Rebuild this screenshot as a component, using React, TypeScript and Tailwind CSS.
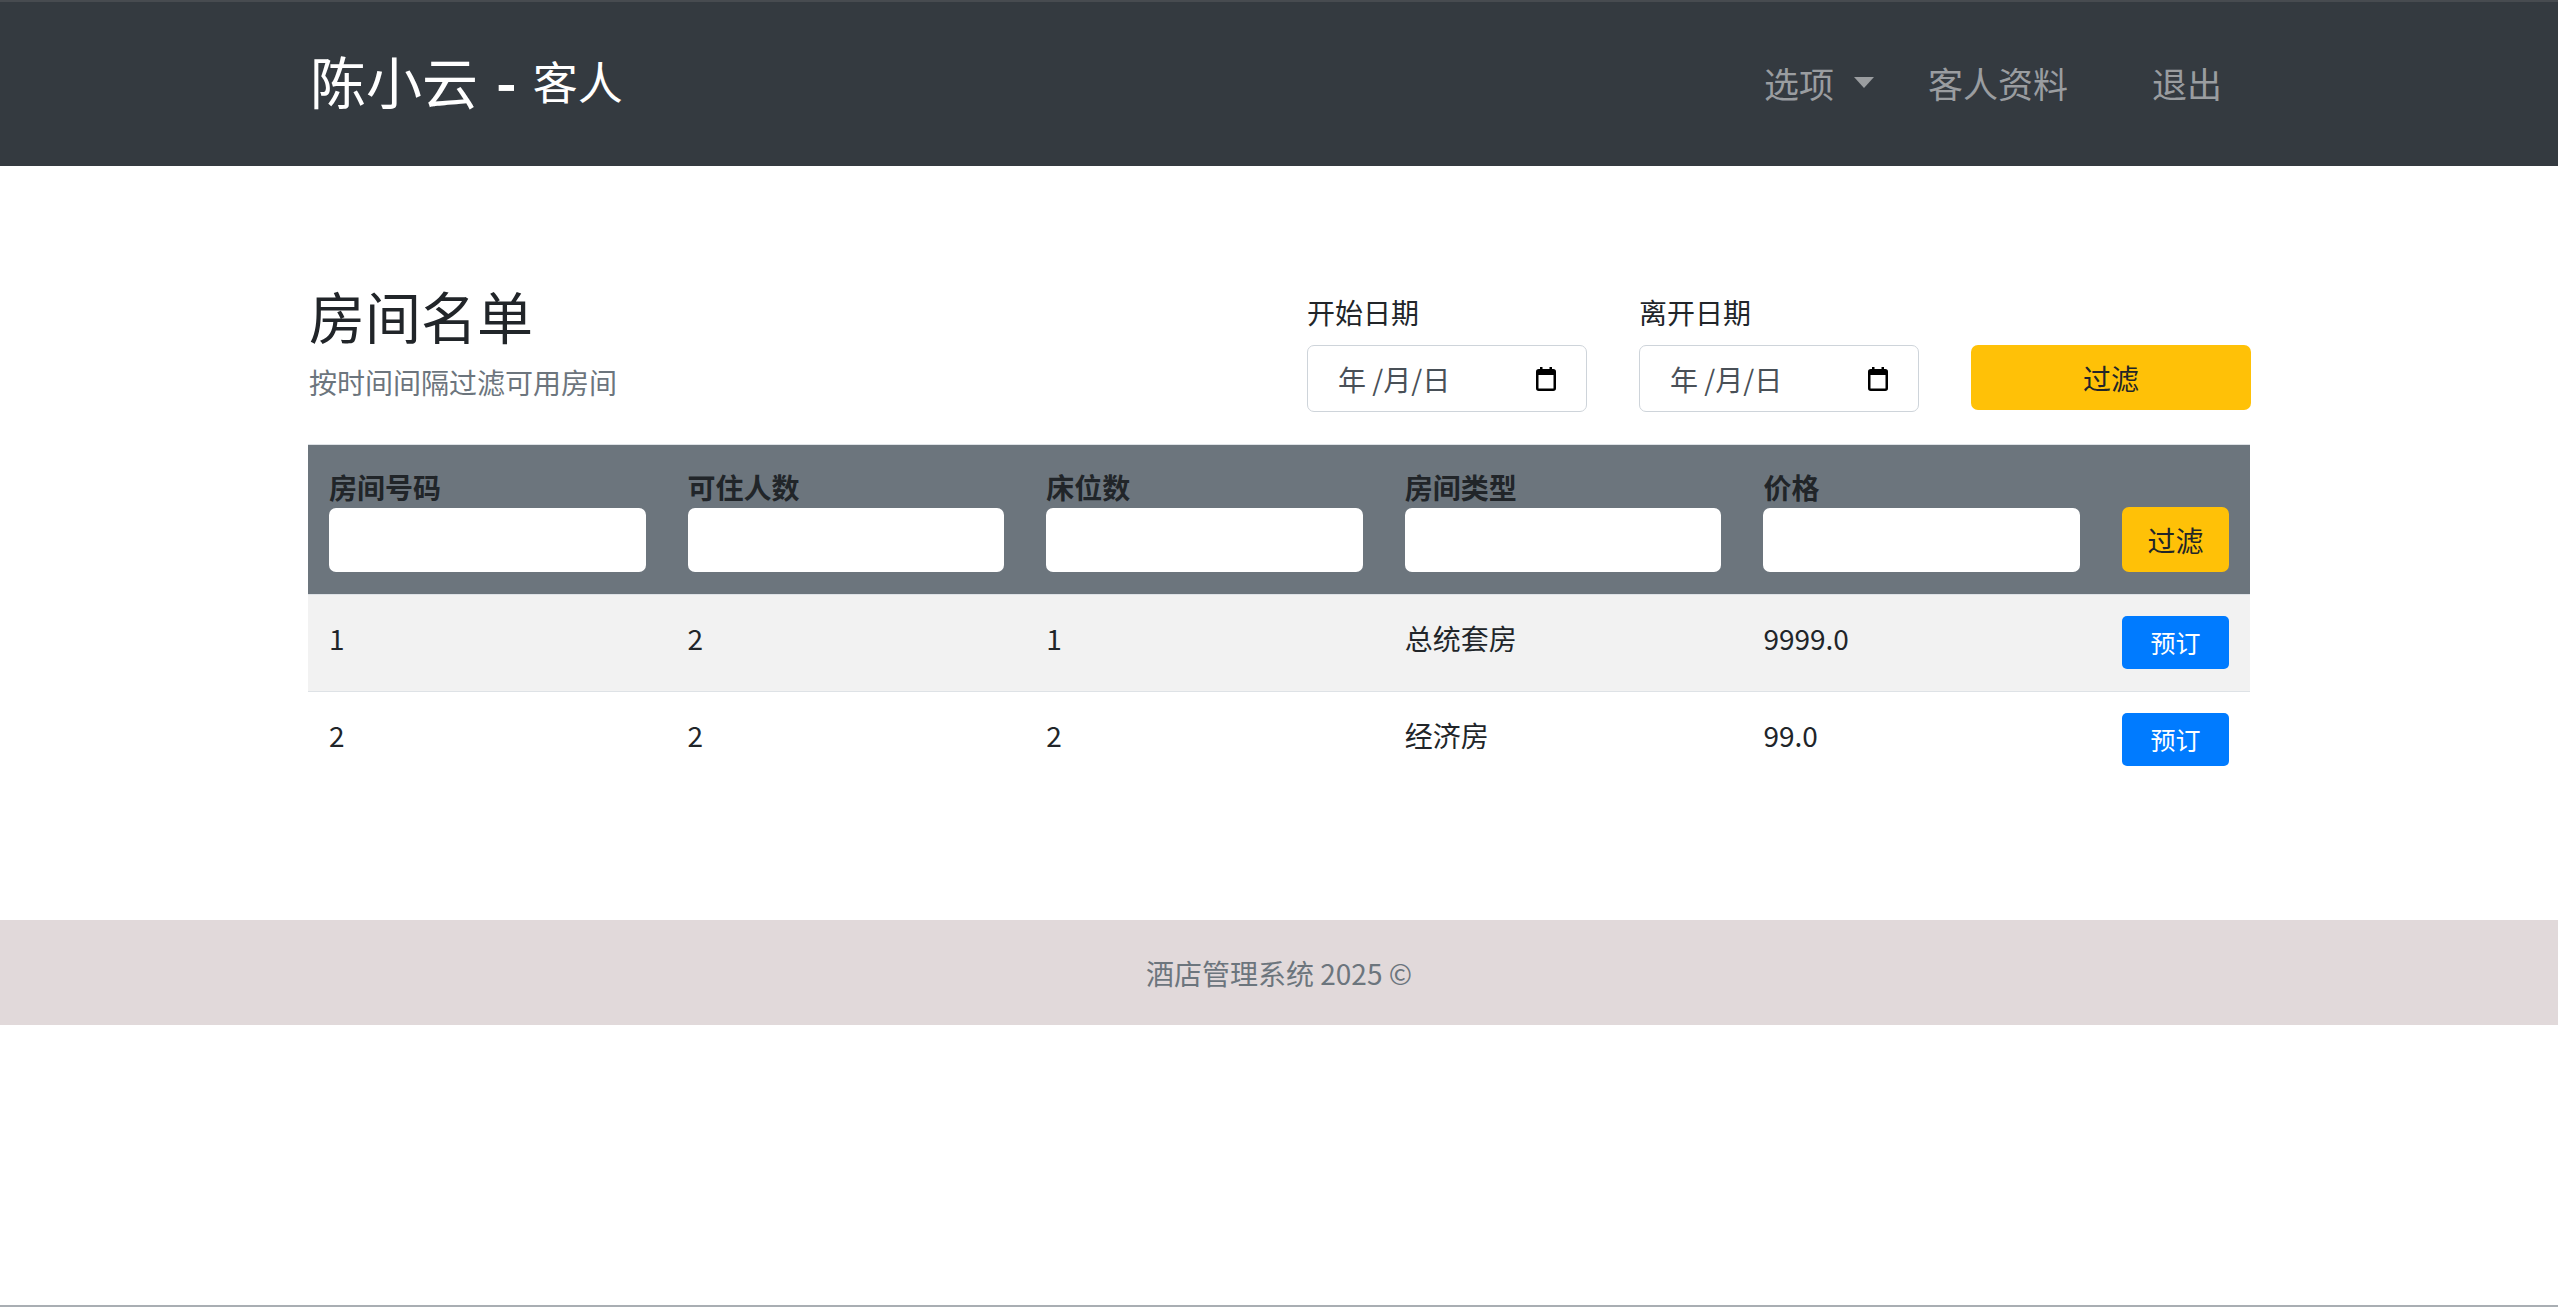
import React from "react";

const rooms = [
  { no: "1", cap: "2", beds: "1", type: "总统套房", price: "9999.0" },
  { no: "2", cap: "2", beds: "2", type: "经济房", price: "99.0" },
];

const columns = ["房间号码", "可住人数", "床位数", "房间类型", "价格"];

function CalendarIcon() {
  return (
    <svg width="20" height="25" viewBox="0 0 20 25">
      <rect x="1.25" y="4.25" width="17.5" height="19.5" rx="1.5" fill="none" stroke="#000" strokeWidth="2.5" />
      <rect x="1" y="4" width="18" height="5" fill="#000" />
      <rect x="4" y="1" width="2.5" height="5" fill="#000" />
      <rect x="13.5" y="1" width="2.5" height="5" fill="#000" />
    </svg>
  );
}

function DateField({ label }: { label: string }) {
  return (
    <div className="mt-[10px] flex flex-col">
      <label className="mb-[12px] text-[28px] leading-[42px] text-[#212529]">{label}</label>
      <div className="flex h-[67px] items-center justify-between rounded-[7px] border border-[#ced4da] bg-white pl-[30px] pr-[30px]">
        <span className="text-[28px] text-[#495057]">年 /月/日</span>
        <CalendarIcon />
      </div>
    </div>
  );
}

export default function App() {
  return (
    <div className="flex h-screen flex-col border-b-2 border-[#a9aeb3] bg-white font-['Noto_Sans_CJK_SC','Noto_Sans',sans-serif]">
      {/* 导航栏 */}
      <nav className="h-[166px] shrink-0 border-t-2 border-[#474b50] bg-[#343a40]">
        <div className="mx-auto flex h-full w-[1942px] items-center justify-between pl-[2px]">
          <div className="-mt-[8px] flex items-center text-[56px] leading-none text-white">
            <span>陈小云</span>
            <span className="ml-[18px] font-bold">-</span>
            <span className="ml-[16px] text-[45px]">客人</span>
          </div>
          <div className="mr-[28px] -mt-[4px] flex items-center text-[35px] leading-none text-[#9a9da0]">
            <span>选项</span>
            <span className="ml-[20px] h-0 w-0 border-x-[10.5px] border-t-[11px] border-x-transparent border-t-[#9a9da0]" />
            <span className="ml-[54px]">客人资料</span>
            <span className="ml-[84px]">退出</span>
          </div>
        </div>
      </nav>

      {/* 主体 */}
      <main className="mx-auto w-[1942px]">
        <div className="mt-[115px] grid grid-cols-[946px_280px_280px_280px] items-start gap-x-[52px] pl-[1px]">
          <div>
            <h2 className="text-[56px] leading-[67px] text-[#212529]">房间名单</h2>
            <p className="mt-[13px] text-[28px] leading-[42px] text-[#6c757d]">按时间间隔过滤可用房间</p>
          </div>
          <DateField label="开始日期" />
          <DateField label="离开日期" />
          <button className="mt-[64px] h-[65px] rounded-[7px] bg-[#ffc107] text-[28px] text-[#212529]">
            过滤
          </button>
        </div>

        {/* 表格 */}
        <div className="mt-[32px] border-t border-[#dee2e6]">
          <div className="grid grid-cols-[1fr_1fr_1fr_1fr_1fr_149px] bg-[#6c757d]">
            {columns.map((c) => (
              <div key={c} className="px-[21px] pb-[22px] pt-[21px]">
                <div className="text-[28px] font-bold leading-[42px] text-[#212529]">{c}</div>
                <div className="h-[64px] rounded-[7px] bg-white" />
              </div>
            ))}
            <div className="flex items-end px-[21px] pb-[22px] pt-[21px]">
              <button className="h-[65px] w-[107px] rounded-[7px] bg-[#ffc107] text-[28px] text-[#212529]">
                过滤
              </button>
            </div>
          </div>
          {rooms.map((r, i) => (
            <div
              key={r.no}
              className={`grid h-[97px] grid-cols-[1fr_1fr_1fr_1fr_1fr_149px] border-t border-[#dee2e6] ${
                i % 2 === 0 ? "bg-[#f2f2f2]" : "bg-white"
              }`}
            >
              {[r.no, r.cap, r.beds, r.type, r.price].map((v, j) => (
                <div key={j} className="px-[21px] pt-[22px] text-[28px] leading-[42px] text-[#212529]">
                  {v}
                </div>
              ))}
              <div className="px-[21px] pt-[21px]">
                <button className="h-[53px] w-[107px] rounded-[5px] bg-[#007bff] text-[25px] text-white">
                  预订
                </button>
              </div>
            </div>
          ))}
        </div>
      </main>

      {/* 页脚 */}
      <footer className="mt-[132px] flex h-[105px] shrink-0 items-center justify-center bg-[#e1d9da]">
        <span className="text-[28px] text-[#6c757d]">酒店管理系统 2025 ©</span>
      </footer>
      <div className="flex-1" />
    </div>
  );
}
